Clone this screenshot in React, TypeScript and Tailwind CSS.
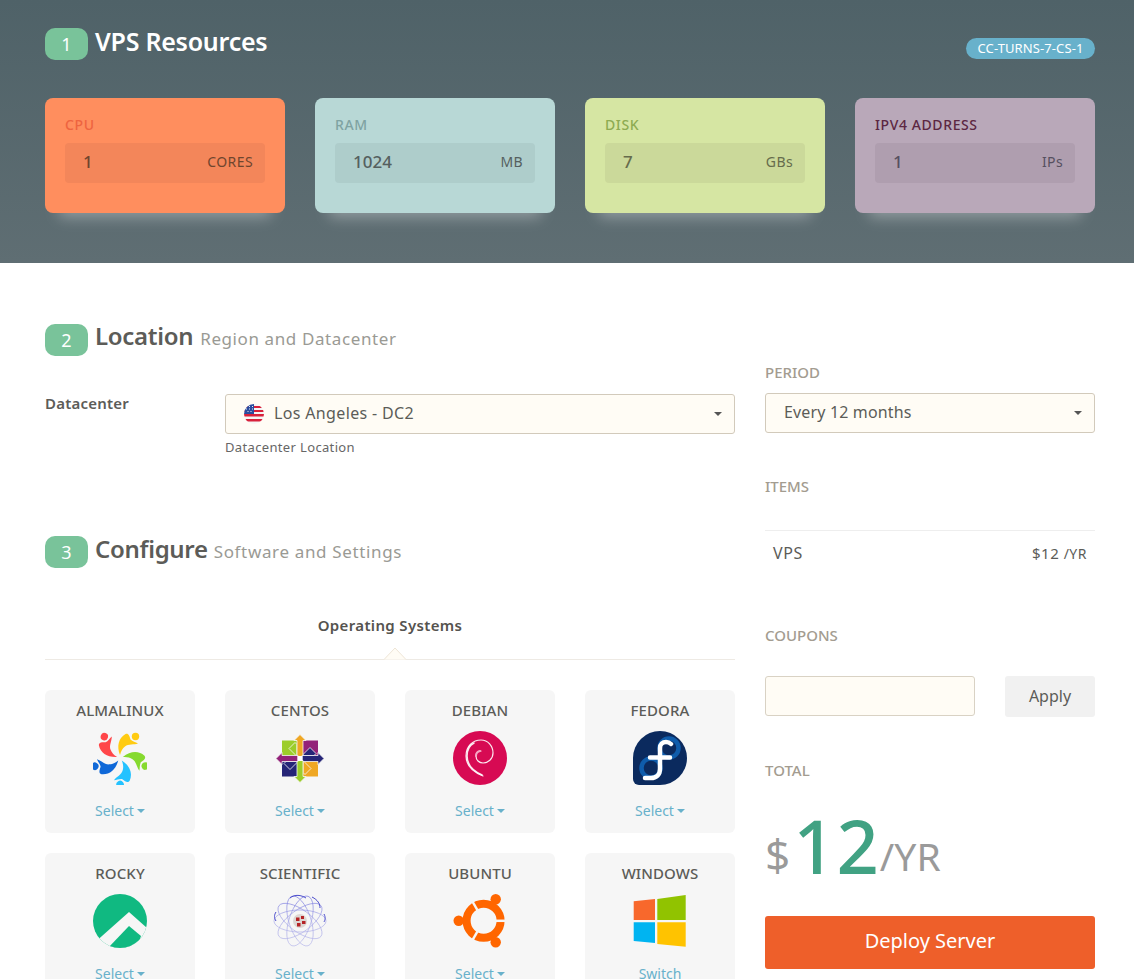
import type { ReactNode } from 'react';

const FONT = '"Noto Sans", "Open Sans", sans-serif';

const resources = [
  { label: 'CPU', value: '1', unit: 'CORES', bg: 'bg-[#ff8e5e]', labelColor: 'text-[#ee6440]', valueColor: 'text-[#6f452e]', unitColor: 'text-[#6f452e]', inner: 'bg-[#f3865a]' },
  { label: 'RAM', value: '1024', unit: 'MB', bg: 'bg-[#b8d8d6]', labelColor: 'text-[#7fa3a2]', valueColor: 'text-[#55605f]', unitColor: 'text-[#55605f]', inner: 'bg-[#aecdcb]' },
  { label: 'DISK', value: '7', unit: 'GBs', bg: 'bg-[#d6e6a3]', labelColor: 'text-[#8dab52]', valueColor: 'text-[#666c4c]', unitColor: 'text-[#666c4c]', inner: 'bg-[#cbd99a]' },
  { label: 'IPV4 ADDRESS', value: '1', unit: 'IPs', bg: 'bg-[#b9a8b9]', labelColor: 'text-[#5c2742]', valueColor: 'text-[#565060]', unitColor: 'text-[#565060]', inner: 'bg-[#af9eaf]' },
];

const Caret = ({ className = '' }: { className?: string }) => (
  <span className={`inline-block h-0 w-0 border-x-[4px] border-t-[4px] border-x-transparent ${className}`} />
);

const StepBadge = ({ n }: { n: number }) => (
  <span className="flex h-[32px] w-[43px] shrink-0 items-center justify-center rounded-[10px] bg-[#79c39a] text-[18px] text-white">
    {n}
  </span>
);

const SideLabel = ({ children, className = '' }: { children: ReactNode; className?: string }) => (
  <div className={`h-[20px] text-[15px] font-medium leading-[18px] text-[#a39c90] ${className}`}>{children}</div>
);

const AlmaLogo = () => {
  const colors = ['#ffcb12', '#86da2f', '#24c2ff', '#0f68d8', '#ff4649'];
  return (
    <svg viewBox="0 0 54 54" className="h-[54px] w-[54px]">
      {colors.map((c, i) => (
        <g key={c} fill={c} transform={`rotate(${i * 72} 27 27)`}>
          <circle cx="42.500" cy="5.500" r="3.700" />
          <path d="M27 24C23.500 15 25.500 7 32.500 3C35.500 2 36.500 5 37.500 8.500C39.500 10.500 42.500 11 45 12.500C41 14 35.500 12.500 32 15.500C29.500 17.500 28 20 27 24Z" />
        </g>
      ))}
    </svg>
  );
};

const CentosLogo = () => {
  const rects = [
    { a: 0, fill: '#9ccd2a' },
    { a: 90, fill: '#262577' },
    { a: 180, fill: '#efa724' },
    { a: 270, fill: '#262577' },
  ];
  return (
    <svg viewBox="0 0 48 48" className="h-[49px] w-[48px]">
      <rect x="6" y="6" width="18" height="18" fill="#9ccd2a" />
      <rect x="24" y="6" width="18" height="18" fill="#932279" />
      <rect x="24" y="24" width="18" height="18" fill="#efa724" />
      <rect x="6" y="24" width="18" height="18" fill="#262577" />
      {rects.map((r) => (
        <path key={r.a} d="M21 22L13 14L19 8L21 10Z" fill={r.fill} stroke="#f6f6f6" strokeWidth="0.8" transform={`rotate(${r.a} 24 24)`} />
      ))}
      <g stroke="#f6f6f6" strokeWidth="0.8">
        <path d="M24 0l6 6h-3v16h-6V6h-3z" fill="#efa724" />
        <path d="M48 24l-6 6v-3H26v-6h16v-3z" fill="#262577" />
        <path d="M24 48l-6-6h3V26h6v16h3z" fill="#9ccd2a" />
        <path d="M0 24l6-6v3h16v6H6v3z" fill="#932279" />
      </g>
      <rect x="21.500" y="21.500" width="5" height="5" fill="#fff" />
    </svg>
  );
};

const DebianLogo = () => (
  <svg viewBox="0 0 54 54" className="h-[54px] w-[54px]">
    <circle cx="27" cy="27" r="27" fill="#d70a53" />
    <path d="M30 45C20 41 13 34 13 25C13 15 20 9 28 9C35 9 40 15 40 22C40 28 35 32 30 32C26 32 23 29 23 25C23 22 25 20 28 20" fill="none" stroke="#fff" strokeWidth="1.200" strokeLinecap="round" opacity="0.9" />
    <path d="M29 44C20 40 14 33 14 25C14 19 17 14 21 12" fill="none" stroke="#fff" strokeWidth="1.600" strokeLinecap="round" opacity="0.9" />
    <path d="M23 25C23 22 24.500 20.500 27 20" fill="none" stroke="#f6a6c4" strokeWidth="2" strokeLinecap="round" />
  </svg>
);

const FedoraLogo = () => (
  <svg viewBox="0 0 54 54" className="h-[54px] w-[54px]">
    <path d="M27 0A27 27 0 1 1 27 54H6A6 6 0 0 1 0 48V27A27 27 0 0 1 27 0Z" fill="#0b2a5e" />
    <circle cx="36" cy="17" r="9.500" fill="none" stroke="#0f5cab" strokeWidth="4.500" />
    <circle cx="18" cy="37" r="9.500" fill="none" stroke="#0f5cab" strokeWidth="4.500" />
    <path d="M12 47H18C23.500 47 27 43.500 27 38V17C27 13.500 29.500 11 33 11C35 11 37 12 38 13M17 26.500H37" fill="none" stroke="#fff" strokeWidth="4.500" strokeLinecap="round" />
  </svg>
);

const RockyLogo = () => (
  <svg viewBox="0 0 54 54" className="h-[54px] w-[54px]">
    <defs>
      <clipPath id="rockyClip">
        <circle cx="27" cy="27" r="27" />
      </clipPath>
    </defs>
    <g clipPath="url(#rockyClip)">
      <rect width="54" height="54" fill="#10b981" />
      <path d="M0 50L36 18L54 34V54H0Z" fill="#f6f6f6" />
      <path d="M15 54L36 32L48 42L44 54Z" fill="#10b981" />
    </g>
  </svg>
);

const ScientificLogo = () => (
  <svg viewBox="0 0 54 54" className="h-[54px] w-[54px]">
    <defs>
      <linearGradient id="sciFade" x1="0" y1="0" x2="0" y2="1">
        <stop offset="0" stopColor="#ddd" />
        <stop offset="0.5" stopColor="#888" />
        <stop offset="1" stopColor="#666" />
      </linearGradient>
      <mask id="sciMask">
        <rect width="54" height="54" fill="url(#sciFade)" />
      </mask>
    </defs>
    <g fill="none" mask="url(#sciMask)">
      {[0, 36, 72, 108, 144].map((a) => (
        <ellipse key={a} cx="27" cy="27" rx="26" ry="11" transform={`rotate(${a} 27 27)`} stroke="#6a6bdc" strokeWidth="0.700" />
      ))}
    </g>
    <path d="M3 18C1 21 1 24 3 27M17 4C22 0 28 1 33 4M39 3C45 6 47 10 47 14M51 20C53 24 52 26 51 28" fill="none" stroke="#4a4bcc" strokeWidth="1" />
    <circle cx="27" cy="27" r="7" fill="#dcd6d3" />
    <path d="M23 23.500h3.500v3.500H23zM28 22h3v3h-3zM29 27h3.500v3H29zM24 29h3.500v3.500H24z" fill="#b52326" />
  </svg>
);

const UbuntuLogo = () => (
  <svg viewBox="0 0 54 54" className="h-[54px] w-[54px]">
    <circle cx="30.600" cy="26.800" r="17" fill="none" stroke="#f60" strokeWidth="8" />
    <g stroke="#f6f6f6" strokeWidth="2.500">
      <path d="M30.600 26.800L18.600 6" />
      <path d="M30.600 26.800L18.600 47.600" />
      <path d="M30.600 26.800L54 26.800" />
    </g>
    <circle cx="42.700" cy="5.300" r="5.200" fill="#f60" />
    <circle cx="42.700" cy="48.300" r="5.200" fill="#f60" />
    <circle cx="5.700" cy="26.800" r="5.200" fill="#f60" />
  </svg>
);

const WindowsLogo = () => (
  <svg viewBox="0 0 54 54" className="h-[54px] w-[54px]">
    <path d="M0.700 7.300L22 5V26H0.700Z" fill="#f8682c" />
    <path d="M24.300 5L52.700 1V26H24.300Z" fill="#91c300" />
    <path d="M0.700 28.300H22V49L0.700 47Z" fill="#00b4f1" />
    <path d="M24.300 28.300H52.700V52.700L24.300 50Z" fill="#ffc300" />
  </svg>
);

const FlagUS = () => (
  <svg viewBox="0 0 20 20" className="h-[20px] w-[20px] shrink-0">
    <defs>
      <clipPath id="flagClip">
        <circle cx="10" cy="10" r="10" />
      </clipPath>
    </defs>
    <g clipPath="url(#flagClip)">
      <rect width="20" height="20" fill="#f5f5f5" />
      <rect y="2" width="20" height="2" fill="#d8213b" />
      <rect y="6" width="20" height="2" fill="#d8213b" />
      <rect y="10" width="20" height="2.500" fill="#d8213b" />
      <rect y="15" width="20" height="2.500" fill="#d8213b" />
      <rect width="10" height="10" fill="#2a4da0" />
      <path d="M2 5h1M5 5h1M8 5h1M3.500 7.500h1M6.500 7.500h1M5 2.500h1M8 2.500h1" stroke="#fff" strokeWidth="0.900" />
    </g>
  </svg>
);

const systems = [
  { name: 'ALMALINUX', logo: <AlmaLogo /> },
  { name: 'CENTOS', logo: <CentosLogo /> },
  { name: 'DEBIAN', logo: <DebianLogo /> },
  { name: 'FEDORA', logo: <FedoraLogo /> },
  { name: 'ROCKY', logo: <RockyLogo /> },
  { name: 'SCIENTIFIC', logo: <ScientificLogo /> },
  { name: 'UBUNTU', logo: <UbuntuLogo /> },
  { name: 'WINDOWS', logo: <WindowsLogo />, action: 'Switch' },
];

export default function App() {
  return (
    <div className="h-[979px] overflow-hidden bg-white" style={{ fontFamily: FONT }}>
      {/* Resources header */}
      <header className="h-[263px] bg-gradient-to-b from-[#4f6268] to-[#5f6e73] pl-[45px] pr-[39px] pt-[28px]">
        <div className="flex h-[32px] items-start justify-between">
          <div className="flex items-center gap-[7px]">
            <StepBadge n={1} />
            <h1 className="-mt-[7px] text-[25px] font-semibold leading-[32px] tracking-[-0.25px] text-white">VPS Resources</h1>
          </div>
          <span className="mt-[10px] flex h-[21px] w-[129px] items-center justify-center rounded-full bg-[#68b1cb] text-[13px] tracking-[0.1px] text-white">
            CC-TURNS-7-CS-1
          </span>
        </div>
        <div className="mt-[38px] grid grid-cols-4 gap-[30px]">
          {resources.map((r) => (
            <div key={r.label} className={`h-[115px] rounded-[8px] px-[20px] pt-[18px] shadow-[0_18px_14px_-14px_rgba(255,255,255,0.35)] ${r.bg}`}>
              <div className={`text-[14px] font-medium leading-[18px] tracking-[0.6px] ${r.labelColor}`}>{r.label}</div>
              <div className={`mt-[9px] flex h-[40px] items-center justify-between rounded-[4px] pl-[18px] pr-[12px] ${r.inner}`}>
                <span className={`-mt-[2px] text-[17px] font-medium ${r.valueColor}`}>{r.value}</span>
                <span className={`-mt-[3px] text-[14px] tracking-[0.4px] ${r.unitColor}`}>{r.unit}</span>
              </div>
            </div>
          ))}
        </div>
      </header>

      <main className="grid grid-cols-[690px_330px] gap-[30px] pl-[45px] pt-[60px]">
        <div className="pt-[1px]">
          {/* Location */}
          <div className="flex items-center gap-[7px]">
            <StepBadge n={2} />
            <h2 className="-mt-[5px] whitespace-nowrap text-[24px] font-semibold leading-[32px] tracking-[-0.3px] text-[#5c5c58]">
              Location <span className="ml-[1px] text-[17px] font-normal tracking-[0.6px] text-[#9a9a94]">Region and Datacenter</span>
            </h2>
          </div>
          <div className="mt-[38px] grid grid-cols-[180px_510px]">
            <label className="-mt-[1px] text-[15px] font-semibold leading-[20px] tracking-[0.2px] text-[#5c5c58]">Datacenter</label>
            <div>
              <div className="flex h-[40px] items-center justify-between rounded-[3px] border border-[#d2cabb] bg-[#fffcf5] pl-[18px] pr-[12px]">
                <span className="flex items-center gap-[10px] text-[16px] tracking-[0.35px] text-[#5c5c58]">
                  <FlagUS />
                  <span className="-mt-[2px]">Los Angeles - DC2</span>
                </span>
                <Caret className="border-t-[#555]" />
              </div>
              <p className="mt-[5px] text-[13px] leading-[17px] tracking-[0.35px] text-[#666]">Datacenter Location</p>
            </div>
          </div>

          {/* Configure */}
          <div className="mt-[80px] flex items-center gap-[7px]">
            <StepBadge n={3} />
            <h2 className="-mt-[4px] whitespace-nowrap text-[24px] font-semibold leading-[32px] tracking-[-0.3px] text-[#5c5c58]">
              Configure <span className="text-[17px] font-normal tracking-[0.65px] text-[#9a9a94]">Software and Settings</span>
            </h2>
          </div>

          <div className="relative mt-[48px] h-[44px] border-b border-[#eeeae4] text-center text-[15px] font-semibold leading-[18px] tracking-[0.35px] text-[#55534f]">
            Operating Systems
            <svg viewBox="0 0 22 13" className="absolute bottom-[-1px] left-[339px] h-[13px] w-[22px]">
              <path d="M0 12.500L11 1L22 12.500" fill="#fffcf5" stroke="#eee5d6" strokeWidth="1" />
            </svg>
          </div>

          <div className="mt-[30px] grid grid-cols-4 gap-x-[30px] gap-y-[20px]">
            {systems.map((os) => (
              <div key={os.name} className="flex h-[143px] flex-col items-center rounded-[6px] bg-[#f6f6f6] pt-[10px]">
                <div className="text-[15px] font-medium leading-[20px] tracking-[0.1px] text-[#5c5c58]">{os.name}</div>
                <div className="mt-[11px] flex h-[54px] items-center justify-center">{os.logo}</div>
                <div className="mt-[16px] flex items-center gap-[3px] text-[14px] leading-[20px] text-[#68b1cb]">
                  {os.action ?? 'Select'}
                  {!os.action && <Caret className="border-t-[#68b1cb]" />}
                </div>
              </div>
            ))}
          </div>
        </div>

        {/* Order summary */}
        <aside className="pt-[40px]">
          <SideLabel>PERIOD</SideLabel>
          <div className="mt-[10px] flex h-[40px] items-center justify-between rounded-[3px] border border-[#d2cabb] bg-[#fffcf5] pl-[18px] pr-[12px] text-[16px] tracking-[0.15px] text-[#5c5c58]">
            <span className="-mt-[2px]">Every 12 months</span>
            <Caret className="border-t-[#555]" />
          </div>

          <SideLabel className="mt-[44px]">ITEMS</SideLabel>
          <div className="mt-[33px] flex h-[46px] items-center justify-between border-t border-[#eeeeee] px-[8px] text-[#5c5c58]">
            <span className="-mt-[1px] text-[16px] tracking-[0.6px]">VPS</span>
            <span className="text-[15px] tracking-[0.5px]">
              $12 <span className="text-[14px]">/YR</span>
            </span>
          </div>

          <SideLabel className="mt-[50px]">COUPONS</SideLabel>
          <div className="mt-[30px] flex justify-between">
            <input className="h-[40px] w-[210px] rounded-[3px] border border-[#d9d2c4] bg-[#fffcf5]" />
            <button className="h-[41px] w-[90px] rounded-[3px] bg-[#f1f1f1] pb-[2px] text-[16px] text-[#5c5c58]">Apply</button>
          </div>

          <SideLabel className="mt-[44px]">TOTAL</SideLabel>
          <div className="mt-[12px] flex h-[90px] items-end whitespace-nowrap leading-none">
            <span className="mb-[7px] text-[44px] text-[#9a9a9a]">$</span>
            <span className="ml-[3px] text-[74px] font-medium tracking-[1px] text-[#41a283]">12</span>
            <span className="mb-[8px] text-[39px] text-[#9a9a9a]">/YR</span>
          </div>
          <button className="mt-[33px] h-[53px] w-full rounded-[3px] bg-[#ee5f2a] pb-[4px] text-[20px] text-white">Deploy Server</button>
        </aside>
      </main>
    </div>
  );
}
